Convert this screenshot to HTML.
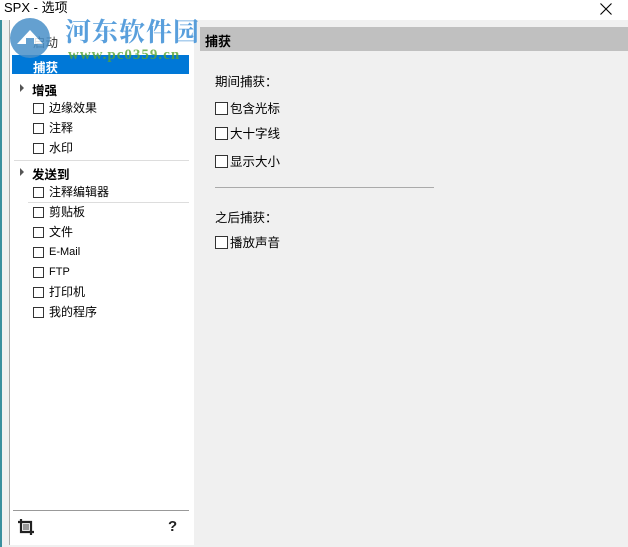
<!DOCTYPE html>
<html><head><meta charset="utf-8"><style>
*{margin:0;padding:0;box-sizing:border-box}
body{width:628px;height:547px;overflow:hidden;background:#f0f0f0;font-family:"Liberation Sans","Noto Sans CJK SC",sans-serif;font-size:12px;color:#000;position:relative}
.abs{position:absolute}
.title{left:0;top:0;width:628px;height:20px;background:#fff}
.cb{display:inline-block;width:11px;height:11px;border:1px solid #333;vertical-align:middle;margin-right:5px;background:#fff}
.item{position:absolute;left:33px;font-size:12px;white-space:nowrap;height:16px;line-height:16px}
.grp{position:absolute;left:20px;font-weight:bold;font-size:12.5px}
.grp:before{content:"";position:absolute;left:0;top:4px;border-left:4px solid #555;border-top:4px solid transparent;border-bottom:4px solid transparent}
.grp span{margin-left:12px}
.opt{position:absolute;left:215px;font-size:12.5px;white-space:nowrap}
.opt .cb{width:13px;height:13px;margin-right:2px;vertical-align:-2px}
</style></head><body>
<div class="abs title"></div>
<div class="abs" style="left:4px;top:0;font-size:13px;line-height:15px">SPX - 选项</div>
<svg class="abs" style="left:600px;top:3px" width="12" height="12" viewBox="0 0 12 12"><path d="M0.5 0.5L11.5 11.5M11.5 0.5L0.5 11.5" stroke="#000" stroke-width="1.1"/></svg>
<div class="abs" style="left:0;top:20px;width:2px;height:527px;background:#3a8f9e"></div>
<div class="abs" style="left:9px;top:20px;width:185px;height:525px;background:#fff;border-left:1px solid #aaa"></div>
<div class="abs" style="left:200px;top:27px;width:428px;height:24px;background:#c0c0c0"></div>
<div class="abs" style="left:205px;top:31px;font-weight:bold;font-size:13px">捕获</div>
<div class="abs" style="left:12px;top:55px;width:177px;height:19px;background:#0078d7"></div>
<div class="abs" style="left:33px;top:32px;font-size:12.5px;color:#333">启动</div>
<div class="abs" style="left:33px;top:57px;font-size:12.5px;color:#fff;font-weight:bold">捕获</div>
<div class="grp" style="top:80px"><span>增强</span></div>
<div class="item" style="top:100px"><span class="cb"></span>边缘效果</div>
<div class="item" style="top:120px"><span class="cb"></span>注释</div>
<div class="item" style="top:140px"><span class="cb"></span>水印</div>
<div class="abs" style="left:14px;top:160px;width:175px;height:1px;background:#ddd"></div>
<div class="grp" style="top:164px"><span>发送到</span></div>
<div class="item" style="top:184px"><span class="cb"></span>注释编辑器</div>
<div class="abs" style="left:28px;top:202px;width:161px;height:1px;background:#ddd"></div>
<div class="item" style="top:204px"><span class="cb"></span>剪贴板</div>
<div class="item" style="top:224px"><span class="cb"></span>文件</div>
<div class="item" style="top:244px;font-size:11px"><span class="cb"></span>E-Mail</div>
<div class="item" style="top:264px;font-size:11px"><span class="cb"></span>FTP</div>
<div class="item" style="top:284px"><span class="cb"></span>打印机</div>
<div class="item" style="top:304px"><span class="cb"></span>我的程序</div>
<div class="abs" style="left:13px;top:510px;width:176px;height:1px;background:#999"></div>
<svg class="abs" style="left:17px;top:518px" width="20" height="20" viewBox="0 0 20 20"><path d="M4 1v13h13M1 4h13v13" stroke="#222" stroke-width="2.2" fill="none"/><rect x="6" y="6" width="6" height="6" fill="#999"/></svg>
<div class="abs" style="left:168px;top:518px;font-weight:bold;font-size:15px;color:#222">?</div>
<div class="opt" style="top:71px">期间捕获：</div>
<div class="opt" style="top:98px"><span class="cb"></span>包含光标</div>
<div class="opt" style="top:123px"><span class="cb"></span>大十字线</div>
<div class="opt" style="top:151px"><span class="cb"></span>显示大小</div>
<div class="abs" style="left:215px;top:187px;width:219px;height:1px;background:#aaa"></div>
<div class="opt" style="top:207px">之后捕获：</div>
<div class="opt" style="top:232px"><span class="cb"></span>播放声音</div>
<svg class="abs" style="left:5px;top:14px;opacity:.85" width="60" height="50" viewBox="0 0 60 50"><circle cx="25" cy="24" r="20" fill="#4a90c8"/><path d="M12 30l13-14 13 14z" fill="#fff"/><rect x="21" y="24" width="8" height="10" fill="#4a90c8"/></svg>
<div class="abs" style="left:65px;top:12px;font-size:26px;font-weight:bold;color:#3d8fd6;opacity:.85;font-family:'Liberation Serif','Noto Serif CJK SC',serif;letter-spacing:1px">河东软件园</div>
<div class="abs" style="left:68px;top:47px;font-size:15px;font-weight:bold;color:#5aa532;opacity:.8;font-family:'Liberation Serif',serif;letter-spacing:1px">www.pc0359.cn</div>
</body></html>
